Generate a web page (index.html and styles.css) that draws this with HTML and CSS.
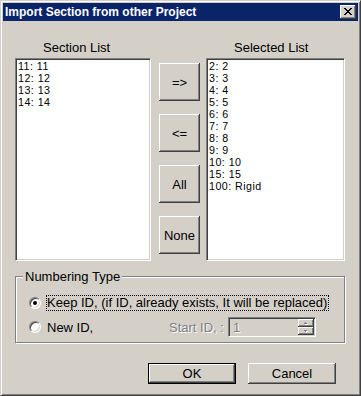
FILE: index.html
```html
<!DOCTYPE html>
<html lang="en">
<head>
  <meta charset="UTF-8" />
  <title>Import Section from other Project</title>
  <link rel="stylesheet" href="styles.css">
</head>
<body>
  <div class="window">
    <div class="titlebar">
      <span class="title">Import Section from other Project</span>
      <span class="close-btn">
        <svg width="16" height="14" viewBox="0 0 16 14" shape-rendering="crispEdges">
          <path fill="#000" d="M4 3h2v1H4z M10 3h2v1h-2z M5 4h2v1H5z M9 4h2v1H9z M6 5h4v1H6z M7 6h2v1H7z M6 7h4v1H6z M5 8h2v1H5z M9 8h2v1H9z M4 9h2v1H4z M10 9h2v1h-2z"/>
        </svg>
      </span>
    </div>

    <div class="body">
      <div class="lists">
        <div class="list-col left">
          <div class="list-label">Section List</div>
          <div class="listbox">
            <div>11: 11</div>
            <div>12: 12</div>
            <div>13: 13</div>
            <div>14: 14</div>
          </div>
        </div>

        <div class="move-btns">
          <button class="btn">=&gt;</button>
          <button class="btn">&lt;=</button>
          <button class="btn">All</button>
          <button class="btn">None</button>
        </div>

        <div class="list-col right">
          <div class="list-label">Selected List</div>
          <div class="listbox">
            <div>2: 2</div>
            <div>3: 3</div>
            <div>4: 4</div>
            <div>5: 5</div>
            <div>6: 6</div>
            <div>7: 7</div>
            <div>8: 8</div>
            <div>9: 9</div>
            <div>10: 10</div>
            <div>15: 15</div>
            <div>100: Rigid</div>
          </div>
        </div>
      </div>

      <div class="group">
        <span class="legend">Numbering Type</span>
        <div class="opt-row">
          <span class="radio checked"></span>
          <span class="focus">Keep ID, (if ID, already exists, It will be replaced)</span>
        </div>
        <div class="opt-row second">
          <span class="radio"></span>
          <span class="new-label">New ID,</span>
          <span class="start-label">Start ID, :</span>
          <div class="spin-field">
            <span class="spin-value">1</span>
            <svg class="spin" width="16" height="16" viewBox="0 0 16 16" shape-rendering="crispEdges">
              <rect width="16" height="16" fill="#d4d0c8"/>
              <path fill="#fff" d="M0 0h15v1H1v6H0z"/>
              <path fill="#404040" d="M15 0h1v8H0V7h15z"/>
              <path fill="#808080" d="M14 1h1v6H1V6h13z"/>
              <path fill="#fff" d="M8 4h1v1h1v1H7V5h1z"/>
              <path fill="#808080" d="M7 3h1v1h1v1H6V4h1z"/>
              <path fill="#fff" d="M0 8h15v1H1v6H0z"/>
              <path fill="#404040" d="M15 8h1v8H0v-1h15z"/>
              <path fill="#808080" d="M14 9h1v6H1v-1h13z"/>
              <path fill="#fff" d="M7 12h3v1H9v1H8v-1H7z"/>
              <path fill="#808080" d="M6 11h3v1H8v1H7v-1H6z"/>
            </svg>
          </div>
        </div>
      </div>

      <div class="actions">
        <button class="btn wide default">OK</button>
        <button class="btn wide">Cancel</button>
      </div>
    </div>
  </div>
</body>
</html>
```

FILE: styles.css
```css
* {
  box-sizing: border-box;
}

body {
  margin: 0;
  background: #d4d0c8;
  color: #000;
  font-family: "Liberation Sans", Arial, sans-serif;
  font-size: 13px;
}

.window {
  width: 361px;
  height: 396px;
  background: #d4d0c8;
  border: 1px solid;
  border-color: #d4d0c8 #404040 #404040 #d4d0c8;
  box-shadow: inset 1px 1px #fff, inset -1px -1px #808080;
  padding: 2px;
}

/* title bar */
.titlebar {
  height: 18px;
  background: #0a246a;
  color: #fff;
  display: flex;
  align-items: center;
  justify-content: space-between;
  padding: 0 2px;
  font-size: 12px;
  font-weight: bold;
}

.close-btn {
  width: 16px;
  height: 14px;
  background: #d4d0c8;
  box-shadow: inset -1px -1px #404040, inset 1px 1px #fff, inset -2px -2px #808080, inset 2px 2px #d4d0c8;
}

.close-btn svg {
  display: block;
}

/* dialog body */
.body {
  padding: 0 13px 0 12px;
}

.lists {
  display: flex;
  margin-top: 19px;
}

.list-col.left {
  width: 136px;
}

.list-col.right {
  width: 139px;
}

.list-label {
  line-height: 15px;
  margin: 0 0 3px 28px;
}

.listbox {
  height: 203px;
  background: #fff;
  border: 1px solid;
  border-color: #808080 #fff #fff #808080;
  box-shadow: inset 1px 1px #404040, inset -1px -1px #d4d0c8;
  padding: 1px 2px;
  font-size: 10.7px;
  letter-spacing: 0.45px;
  line-height: 12px;
}

.move-btns {
  width: 41px;
  margin: 0 6px 0 8px;
  padding-top: 23px;
  display: flex;
  flex-direction: column;
  gap: 13px;
}

.btn {
  width: 41px;
  height: 38px;
  padding: 0;
  border: 0;
  background: #d4d0c8;
  color: #000;
  font: inherit;
  box-shadow: inset -1px -1px #404040, inset 1px 1px #fff, inset -2px -2px #808080, inset 2px 2px #d4d0c8;
}

.btn.wide {
  width: 88px;
  height: 21px;
}

.btn.default {
  box-shadow: inset 0 0 0 1px #000, inset -2px -2px #404040, inset 2px 2px #fff, inset -3px -3px #808080, inset 3px 3px #d4d0c8;
}

/* numbering type group */
.group {
  position: relative;
  margin-top: 15px;
  border: 1px solid #808080;
  box-shadow: 1px 1px #fff, inset 1px 1px #fff;
  padding: 18px 0 5px 13px;
}

.legend {
  position: absolute;
  top: -8px;
  left: 7px;
  padding: 0 2px;
  background: #d4d0c8;
  line-height: 15px;
}

.opt-row {
  display: flex;
  align-items: center;
  height: 16px;
}

.opt-row.second {
  height: 20px;
  margin-top: 6px;
}

.radio {
  position: relative;
  flex: none;
  width: 12px;
  height: 12px;
  margin-right: 5px;
  border-radius: 50%;
  background: #fff;
  border: 1px solid;
  border-color: #808080 #fff #fff #808080;
  box-shadow: inset 1px 1px #404040, inset -1px -1px #d4d0c8;
}

.radio.checked::after {
  content: "";
  position: absolute;
  left: 3px;
  top: 3px;
  width: 4px;
  height: 4px;
  border-radius: 50%;
  background: #000;
}

.focus {
  border: 1px dotted #000;
  line-height: 14px;
  padding-right: 1px;
}

.new-label {
  width: 123px;
  padding-left: 1px;
}

.start-label {
  width: 59px;
  color: #808080;
  text-shadow: 1px 1px #fff;
}

.spin-field {
  width: 88px;
  height: 20px;
  display: flex;
  align-items: center;
  justify-content: space-between;
  border: 1px solid;
  border-color: #808080 #fff #fff #808080;
  box-shadow: inset 1px 1px #404040, inset -1px -1px #d4d0c8;
  padding: 1px;
}

.spin-value {
  padding-left: 3px;
  color: #808080;
  text-shadow: 1px 1px #fff;
}

.spin {
  display: block;
}

.actions {
  display: flex;
  justify-content: flex-end;
  gap: 12px;
  margin-top: 20px;
  padding-right: 9px;
}
```
